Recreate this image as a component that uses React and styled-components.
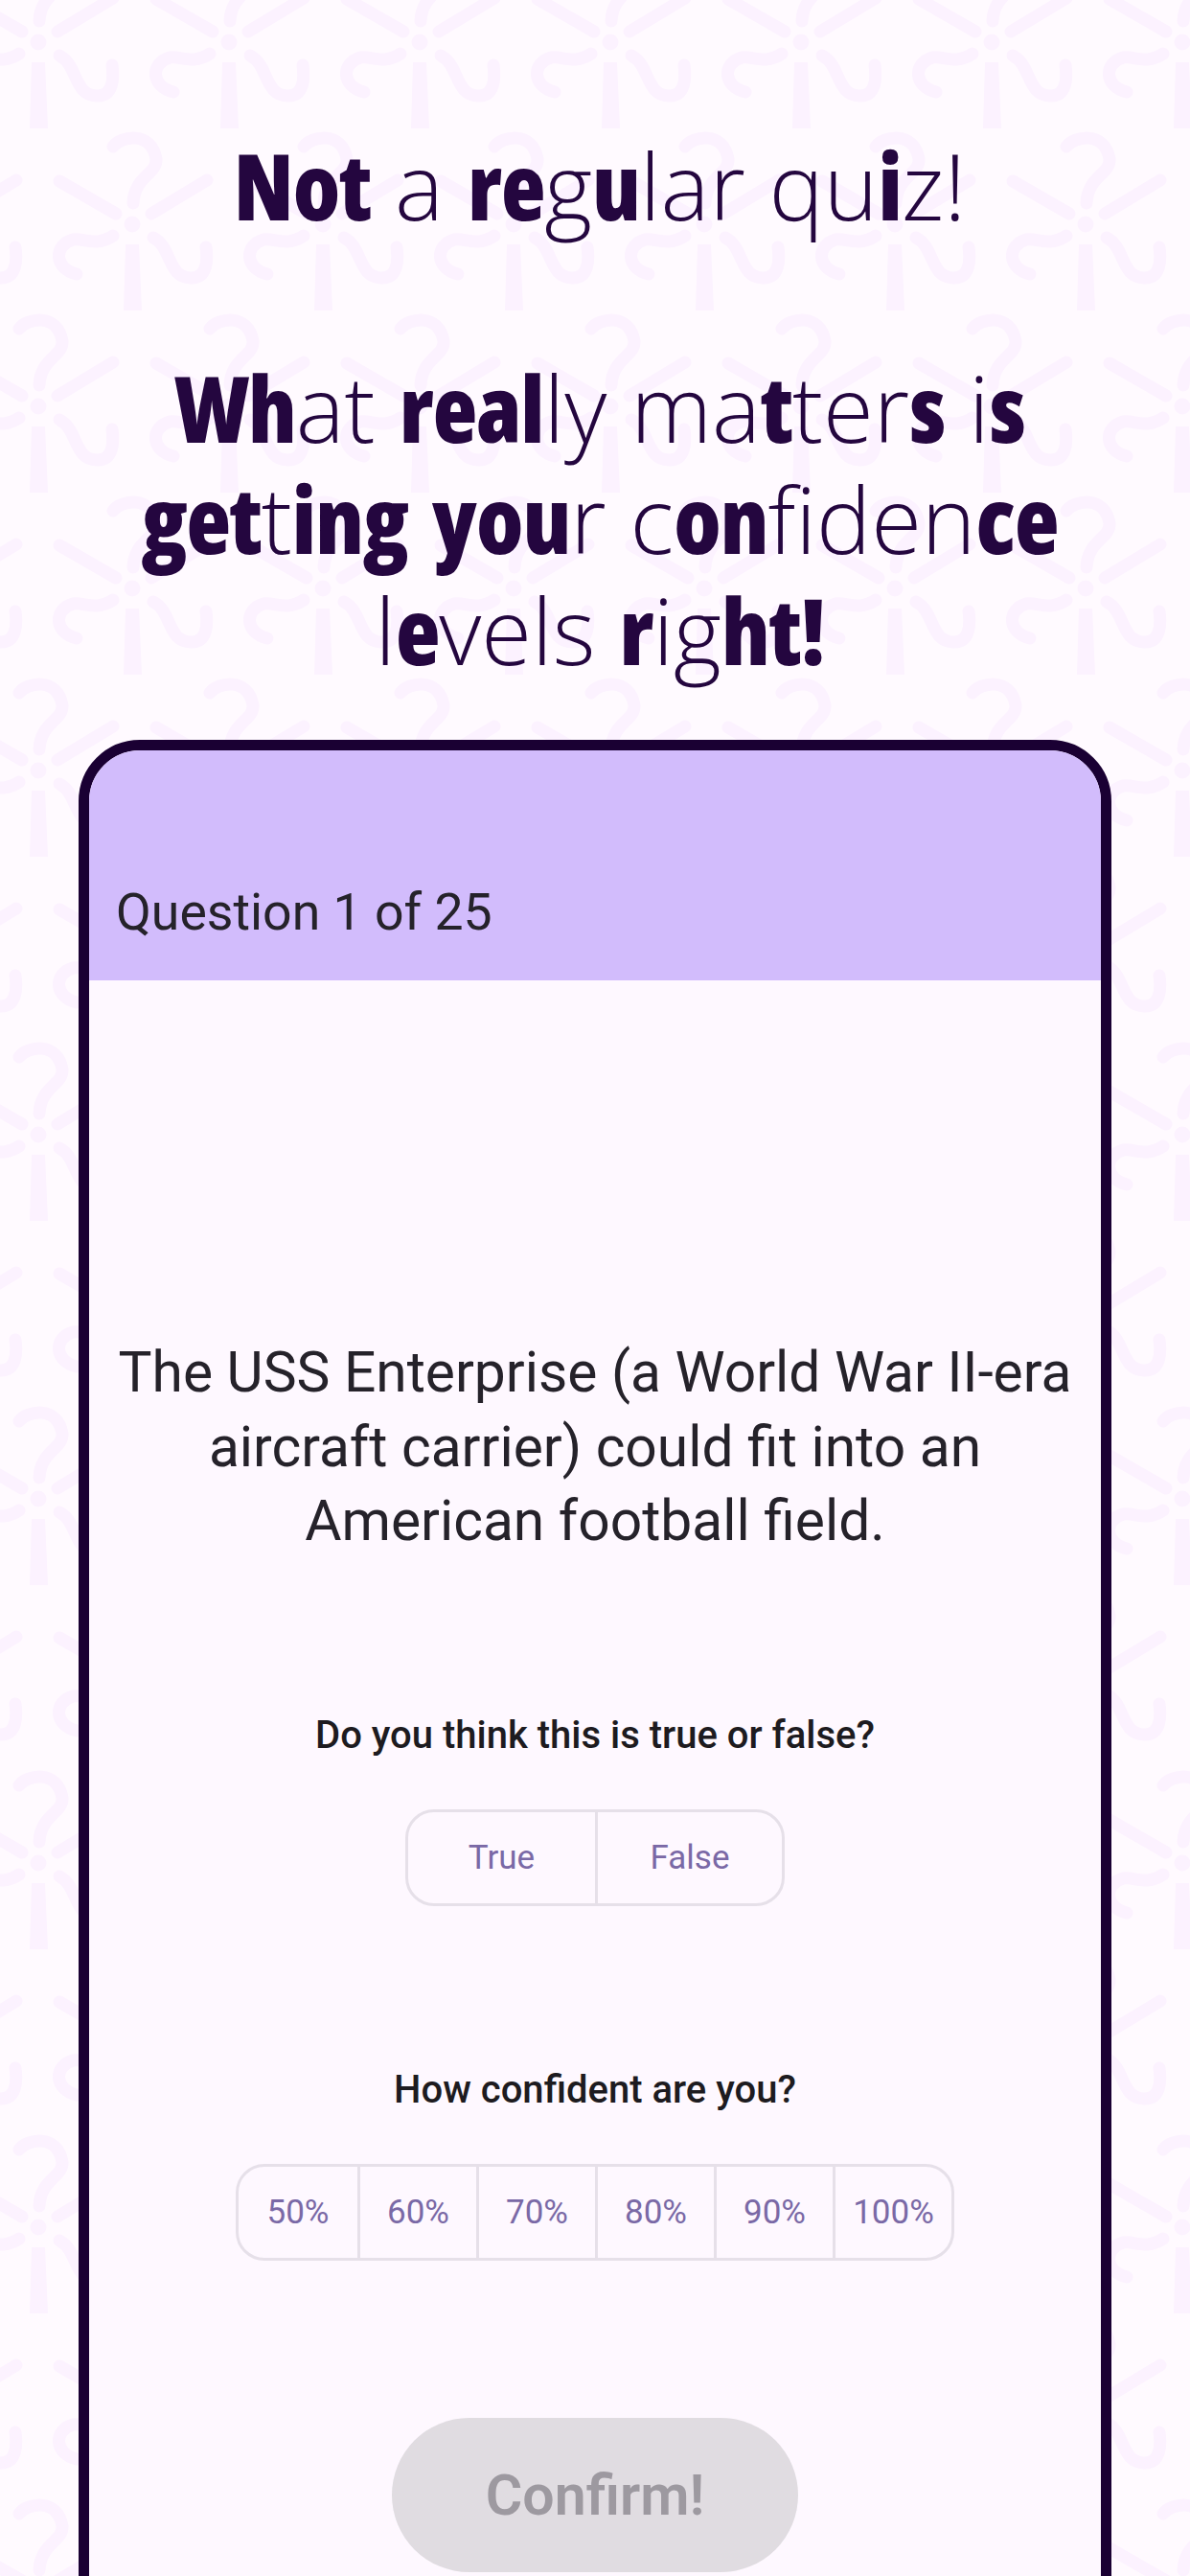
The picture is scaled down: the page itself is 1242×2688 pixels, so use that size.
import React from "react";
import styled, { createGlobalStyle } from "styled-components";

const GlobalStyle = createGlobalStyle`
  html, body {
    margin: 0;
    padding: 0;
    height: 2688px;
    overflow: hidden;
    background: #fffaff;
  }
  * { box-sizing: border-box; }
`;

const headingLines = [
  "**Not** a **re**g**u**lar qu**i**z!",
  "",
  "**Wh**at **real**ly ma**t**ter**s** i**s**",
  "**get**t**ing** **you**r c**on**fiden**ce**",
  "l**e**vels **r**ig**ht!**",
];

const truthOptions = ["True", "False"];
const confidenceOptions = ["50%", "60%", "70%", "80%", "90%", "100%"];

const Motif = ({ x, y }) => (
  <g transform={`translate(${x} ${y})`}>
    <circle r="8.5" fill="#fcf2ff" />
    <path d="M-20 -81 C-12 -92 20 -98 25 -68 C26 -52 2 -50 1 -22" />
    <path d="M-76 -45 L-17 -11" />
    <path d="M78 -46 L20 -11" />
    <path d="M22 14 C42 24 36 56 62 56 C78 56 79 38 77 24" strokeWidth="15" />
    <path d="M-20 12 C-38 24 -50 14 -62 16 C-82 22 -82 46 -58 52" strokeWidth="15" />
    <polygon points="-7,21 7,21 10,90 -9,90" fill="#fcf2ff" stroke="none" />
  </g>
);

const App = () => (
  <>
    <GlobalStyle />
    <Page>
      <Backdrop aria-hidden="true">
        <defs>
          <pattern id="quiz-tile" width="199" height="380" patternUnits="userSpaceOnUse">
            {[-199, 0, 199].map((dx) =>
              [-380, 0, 380].map((dy) => (
                <React.Fragment key={`${dx}${dy}`}>
                  <Motif x={40 + dx} y={44 + dy} />
                  <Motif x={138 + dx} y={234 + dy} />
                </React.Fragment>
              ))
            )}
          </pattern>
        </defs>
        <rect width="100%" height="100%" fill="url(#quiz-tile)" />
      </Backdrop>

      <Heading>
        {headingLines.map((line, i) => (
          <HeadingLine key={i}>
            {line.split("**").map((part, j) => (
              <Letters key={j} $heavy={j % 2 === 1}>
                {part}
              </Letters>
            ))}
          </HeadingLine>
        ))}
      </Heading>

      <Card>
        <CardHeader>Question 1 of 25</CardHeader>
        <CardBody>
          <Statement>
            The USS Enterprise (a World War II-era
            <br />
            aircraft carrier) could fit into an
            <br />
            American football field.
          </Statement>

          <Prompt $top={162}>Do you think this is true or false?</Prompt>
          <Segments $top={55}>
            {truthOptions.map((label) => (
              <Segment key={label} $width={195}>
                {label}
              </Segment>
            ))}
          </Segments>

          <Prompt $top={170}>How confident are you?</Prompt>
          <Segments $top={55}>
            {confidenceOptions.map((label) => (
              <Segment key={label} $width={124}>
                {label}
              </Segment>
            ))}
          </Segments>

          <ConfirmButton disabled>Confirm!</ConfirmButton>
        </CardBody>
      </Card>
    </Page>
  </>
);

export default App;

const Page = styled.div`
  position: relative;
  width: 1242px;
  height: 2688px;
  padding-top: 135px;
  overflow: hidden;
  background: #fffaff;
`;

const Backdrop = styled.svg`
  position: absolute;
  top: 0;
  left: 0;
  width: 100%;
  height: 100%;

  path {
    fill: none;
    stroke: #fcf2ff;
    stroke-width: 13;
    stroke-linecap: round;
  }
`;

const Heading = styled.h1`
  position: relative;
  margin: 0;
  padding-left: 10px;
  text-align: center;
  font-family: "Open Sans", sans-serif;
  font-size: 96px;
  line-height: 116px;
  color: #24063f;
`;

const HeadingLine = styled.div`
  min-height: 116px;
  white-space: pre;
`;

const Letters = styled.span`
  display: inline-block;
  font-weight: ${(p) => (p.$heavy ? 800 : 300)};
  font-stretch: ${(p) => (p.$heavy ? "75%" : "96%")};
  letter-spacing: ${(p) => (p.$heavy ? "-1px" : "0")};
`;

const Card = styled.section`
  position: relative;
  width: 1078px;
  height: 2100px;
  margin: 57px 0 0 82px;
  border: 11px solid #1a0033;
  border-radius: 64px;
  overflow: hidden;
  background: #fef8ff;
`;

const CardHeader = styled.header`
  display: flex;
  align-items: flex-end;
  height: 240px;
  padding: 0 0 40px 28px;
  background: #d2bcfc;
  color: #25222a;
  font-family: "Roboto", sans-serif;
  font-size: 53.6px;
  line-height: 62px;
`;

const CardBody = styled.div`
  display: flex;
  flex-direction: column;
  align-items: center;
  padding-top: 371px;
`;

const Statement = styled.p`
  margin: 0;
  text-align: center;
  font-family: "Roboto", sans-serif;
  font-size: 58.7px;
  line-height: 77.5px;
  color: #25222a;
`;

const Prompt = styled.div`
  margin-top: ${(p) => p.$top}px;
  font-family: "Roboto", sans-serif;
  font-size: 40px;
  font-weight: 500;
  line-height: 44px;
  color: #1d1b20;
`;

const Segments = styled.div`
  display: flex;
  margin-top: ${(p) => p.$top}px;
  height: 101px;
  border: 3px solid #e6e0e9;
  border-radius: 30px;
`;

const Segment = styled.div`
  display: flex;
  align-items: center;
  justify-content: center;
  width: ${(p) => p.$width}px;
  font-family: "Roboto", sans-serif;
  font-size: 35px;
  color: #7a69a6;

  & + & {
    border-left: 3px solid #e6e0e9;
  }
`;

const ConfirmButton = styled.button`
  width: 424px;
  height: 161px;
  margin-top: 164px;
  border: none;
  border-radius: 81px;
  background: #e0dce1;
  color: #9d99a0;
  font-family: "Roboto", sans-serif;
  font-size: 59px;
  font-weight: 600;
`;
